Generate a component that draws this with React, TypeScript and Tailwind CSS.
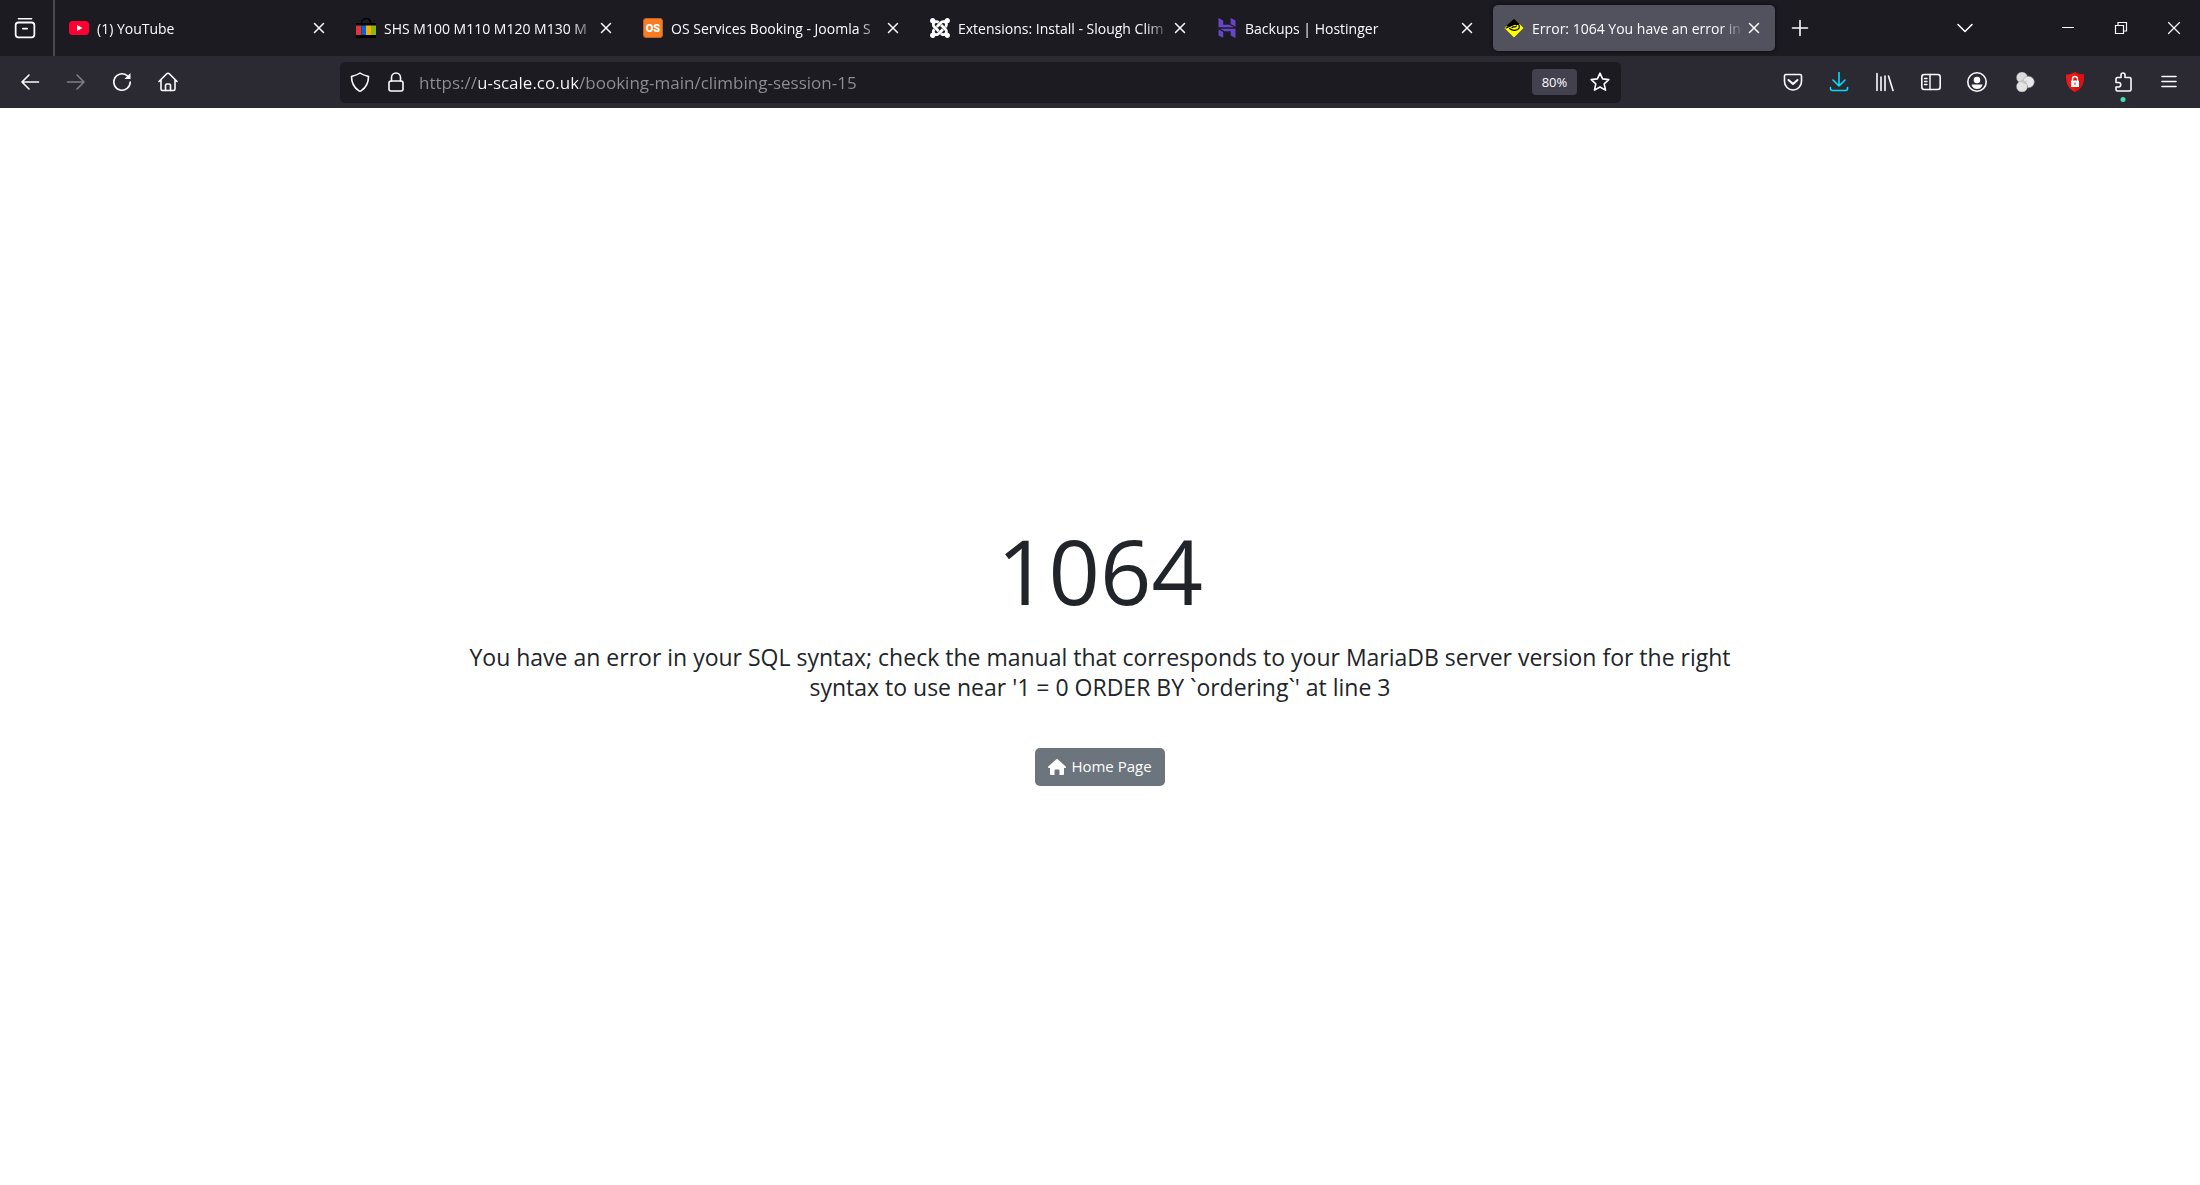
import React from 'react';
import type { ReactNode } from 'react';
import { SiHostinger, SiJoomla } from 'react-icons/si';

type IconProps = { children: ReactNode; className?: string };

const Icon = ({ children, className = 'size-5' }: IconProps) => (
  <svg
    viewBox="0 0 20 20"
    fill="none"
    stroke="currentColor"
    strokeWidth="1.6"
    strokeLinecap="round"
    strokeLinejoin="round"
    className={`shrink-0 ${className}`}
    aria-hidden="true"
  >
    {children}
  </svg>
);

const CloseIcon = () => (
  <Icon>
    <path d="M5.5 5.5l9 9M14.5 5.5l-9 9" strokeWidth="1.5" />
  </Icon>
);

const YoutubeIcon = () => (
  <Icon>
    <rect x="0" y="3" width="20" height="14" rx="3.5" fill="#ff0033" stroke="none" />
    <path d="M8 7l5.5 3L8 13z" fill="#fff" stroke="none" />
  </Icon>
);

const EbayIcon = () => (
  <Icon>
    <g stroke="none">
      <path d="M0 5h20v15H0z" fill="#000" />
      <path d="M0 7.5h5.5V17H0z" fill="#e53238" />
      <path d="M5.5 7.5H10V17H5.5z" fill="#0064d2" />
      <path d="M10 7.5h5V17h-5z" fill="#f5af02" />
      <path d="M15 7.5h5V17h-5z" fill="#86b817" />
    </g>
    <path d="M5.5 5c0-6 9-6 9 0" stroke="#000" strokeWidth="1.3" />
  </Icon>
);

const ServicesIcon = () => (
  <span className="flex size-5 shrink-0 items-center justify-center rounded-[3px] border border-[#b8672f] bg-[#f97b22] font-['Roboto',sans-serif] text-[11px] font-black leading-none text-white">
    OS
  </span>
);

const SignIcon = () => (
  <Icon>
    <g stroke="none">
      <path d="M10 .5l9.5 9.5-9.5 9.5L.5 10z" fill="#ffff00" />
      <path d="M10 .5l5.500 5.500-3 0-6 2.500-3.500 0-1-.500z" fill="#000" />
    </g>
    <path
      d="M2 10c3-.500 5-3 7.500-3.500l5-.200c1.500 1.500 1 4-1 5.200-2.500 1.200-6 .500-8-1M8 9.500c1.500-1.500 3 .500 4.500-1.500"
      stroke="#000"
      strokeWidth="1.2"
    />
  </Icon>
);

const tabs: { title: string; icon: ReactNode; active?: boolean }[] = [
  { title: '(1) YouTube', icon: <YoutubeIcon /> },
  { title: 'SHS M100 M110 M120 M130 M', icon: <EbayIcon /> },
  { title: 'OS Services Booking - Joomla S', icon: <ServicesIcon /> },
  {
    title: 'Extensions: Install - Slough Clim',
    icon: <SiJoomla className="size-5 shrink-0 text-white" />,
  },
  {
    title: 'Backups | Hostinger',
    icon: <SiHostinger className="size-5 shrink-0 text-[#6747c7]" />,
  },
  {
    title: 'Error: 1064 You have an error in',
    icon: <SignIcon />,
    active: true,
  },
];

type BarButtonProps = {
  label: string;
  children: ReactNode;
  className?: string;
  disabled?: boolean;
};

const BarButton = ({
  label,
  children,
  className = 'w-[42px]',
  disabled,
}: BarButtonProps) => (
  <button
    type="button"
    aria-label={label}
    disabled={disabled}
    className={`flex h-10 shrink-0 items-center justify-center rounded disabled:opacity-40 ${className}`}
  >
    {children}
  </button>
);

const TabBar = () => (
  <div className="flex h-14 items-center bg-[#1c1b22]">
    <div className="flex h-14 w-[55px] shrink-0 items-center border-r-2 border-[#4a4950] pl-1">
      <BarButton label="View recent browsing">
        <Icon className="size-[22px]">
          <path d="M4 1.500h12" strokeWidth="1.400" />
          <rect x="1.500" y="5" width="17" height="13.500" rx="2.500" />
          <path d="M8 10.500h4" />
        </Icon>
      </BarButton>
    </div>
    <div className="ml-[3px] flex min-w-0 flex-1 items-center gap-[5px]">
      {tabs.map((tab) => (
        <div
          key={tab.title}
          className={`flex h-[46px] min-w-0 max-w-[282px] flex-1 items-center rounded-[5px] pl-[11px] pr-[11px] ${
            tab.active ? 'bg-[#52525e] shadow-[0_0_4px_#000000aa]' : ''
          }`}
        >
          <button
            type="button"
            className="flex h-full min-w-0 flex-1 items-center gap-2 text-left"
          >
            {tab.icon}
            <span className="min-w-0 flex-1 overflow-hidden whitespace-nowrap pt-px text-[14px] leading-5 [mask-image:linear-gradient(to_right,#000_calc(100%-24px),transparent)]">
              {tab.title}
            </span>
          </button>
          <button type="button" aria-label="Close tab" className="shrink-0">
            <CloseIcon />
          </button>
        </div>
      ))}
      <BarButton label="New tab" className="w-10">
        <Icon>
          <path d="M10 2.500v15M2.500 10h15" />
        </Icon>
      </BarButton>
    </div>
    <BarButton label="List all tabs" className="mr-14 w-10">
      <Icon>
        <path d="M3 6.500l7 7 7-7" />
      </Icon>
    </BarButton>
    <BarButton label="Minimise" className="w-[53px]">
      <Icon>
        <path d="M4 9.500h12" strokeWidth="1" strokeLinecap="butt" />
      </Icon>
    </BarButton>
    <BarButton label="Restore" className="w-[53px]">
      <Icon>
        <path
          d="M4.500 7.500h8v8h-8zM7 7V4.500h8.500V13H13"
          strokeWidth="1.200"
          strokeLinejoin="miter"
        />
      </Icon>
    </BarButton>
    <BarButton label="Close window" className="w-[53px]">
      <Icon>
        <path d="M4.500 4.500l11 11M15.500 4.500l-11 11" strokeWidth="1.200" />
      </Icon>
    </BarButton>
  </div>
);

const AddressBar = () => (
  <div className="flex h-[41px] min-w-0 max-w-[1281px] flex-[20] items-center rounded-[5px] bg-[#1c1b22] px-[2px]">
    <BarButton label="Tracking protection" className="w-9">
      <Icon>
        <path d="M10 1c2.500 2 5.500 2.700 8.500 3.500 0 6-2.500 11-7.200 14.200a2.600 2.600 0 0 1-2.600 0C4 15.500 1.500 10.500 1.500 4.500 4.500 3.700 7.500 3 10 1z" />
      </Icon>
    </BarButton>
    <BarButton label="Connection secure" className="w-[35px]">
      <Icon>
        <rect x="3" y="9" width="14" height="10" rx="2" />
        <path d="M5.500 9V5.500a4.500 4.500 0 0 1 9 0V9" />
      </Icon>
    </BarButton>
    {/* the domain part is brighter than the rest of the address */}
    <input
      type="text"
      aria-label="Address"
      defaultValue="https://u-scale.co.uk/booking-main/climbing-session-15"
      className="ml-[6px] h-9 min-w-0 flex-1 bg-[linear-gradient(to_right,#8f8f96_60px,#fbfbfe_60px,#fbfbfe_159px,#8f8f96_159px)] bg-clip-text pt-px text-[17px] leading-6 text-transparent caret-white outline-none"
    />
    <button
      type="button"
      className="mr-1 h-[26px] w-[45px] rounded bg-[#42414d] text-center text-[13px] leading-[26px]"
    >
      80%
    </button>
    <BarButton label="Bookmark this page" className="w-[38px]">
      <Icon>
        <path d="M10 1.200l2.600 5.700 6.200.7-4.600 4.200 1.300 6.300L10 15l-5.500 3.100 1.300-6.300L1.200 7.600l6.200-.7z" />
      </Icon>
    </BarButton>
  </div>
);

const ToolBar = () => (
  <div className="flex h-[52px] items-center gap-1 bg-[#2b2a33] pl-[9px] pr-[10px]">
    <BarButton label="Back">
      <Icon>
        <path d="M18.500 10H2M9 3l-7 7 7 7" />
      </Icon>
    </BarButton>
    <BarButton label="Forward" disabled>
      <Icon>
        <path d="M1.500 10H18M11 3l7 7-7 7" />
      </Icon>
    </BarButton>
    <BarButton label="Reload">
      <Icon>
        <path d="M18.200 10a8.200 8.200 0 1 1-3-6.300l1.500 1.500" />
        <path d="M18.500 1v6h-6z" fill="currentColor" stroke="none" />
      </Icon>
    </BarButton>
    <BarButton label="Home">
      <Icon>
        <path d="M1 9.500l7.700-7.700a1.800 1.800 0 0 1 2.600 0L19 9.500M3 8v9a1.500 1.500 0 0 0 1.500 1.500h11A1.500 1.500 0 0 0 17 17V8" />
        <path d="M7.500 18.500v-5a1.500 1.500 0 0 1 1.500-1.500h2a1.500 1.500 0 0 1 1.500 1.500v5" />
      </Icon>
    </BarButton>
    <div className="-mx-1 flex min-w-0 flex-1">
      <div className="flex-1" />
      <AddressBar />
      <div className="flex-1" />
    </div>
    <BarButton label="Save to Pocket">
      <Icon>
        <path d="M3 2.500h14A1.500 1.500 0 0 1 18.500 4v5.500a8.500 8.500 0 0 1-17 0V4A1.500 1.500 0 0 1 3 2.500z" />
        <path d="M5.500 8l4.500 4 4.500-4" strokeWidth="2" />
      </Icon>
    </BarButton>
    <BarButton label="Downloads" className="w-[42px] text-[#00ddff]">
      <Icon>
        <path d="M10 0v13.500M4 8l6 6 6-6M1.500 15.500v1a2 2 0 0 0 2 2h13a2 2 0 0 0 2-2v-1" />
      </Icon>
    </BarButton>
    <BarButton label="Library">
      <Icon>
        <path d="M2 1.500v17M6 5v13.500M10 4v14.500M13.500 4l4.500 14.500" />
      </Icon>
    </BarButton>
    <BarButton label="Sidebars">
      <Icon>
        <rect x="0.800" y="2.500" width="18.400" height="15" rx="2.500" />
        <path d="M9 2.500v15M3.500 6.500h2.500M3.500 9.500h2.500M3.500 12.500h2.500" strokeWidth="1.400" />
      </Icon>
    </BarButton>
    <BarButton label="Account">
      <Icon>
        <circle cx="10" cy="10" r="9.200" />
        <circle cx="10" cy="8" r="3.300" fill="currentColor" stroke="none" />
        <path d="M4.500 12.500h11c-.500 3-3 4.500-5.500 4.500s-5-1.500-5.500-4.500z" fill="currentColor" stroke="none" />
      </Icon>
    </BarButton>
    <BarButton label="Containers" className="w-[46px]">
      <Icon>
        <g stroke="#8b8b8b" strokeWidth="0.500">
          <circle cx="7" cy="5.500" r="5.500" fill="#dcdcdc" />
          <circle cx="13.500" cy="10" r="5.800" fill="#e8e8e8" />
          <circle cx="7" cy="14.500" r="5.500" fill="#e3e3e3" />
        </g>
        <path d="M5 9.500c2.500 1.500 5 1 7-1.500l-1 4.500z" fill="#c4c4c4" stroke="none" />
      </Icon>
    </BarButton>
    <BarButton label="Lock shield" className="w-[46px]">
      <Icon>
        <g stroke="none">
          <path d="M10 0c3 2 6 2.500 9 2.500 0 8-1 13.500-9 17.500C2 16 1 10.500 1 2.500 4 2.500 7 2 10 0z" fill="#f31818" />
          <path d="M10 0c3 2 6 2.500 9 2.500 0 8-1 13.500-9 17.500z" fill="#dc1010" />
          <rect x="6" y="8.500" width="8" height="6.500" rx="0.500" fill="#fff" />
          <path d="M9.500 10.500h1v2.500h-1z" fill="#dc1010" />
        </g>
        <path d="M7.500 8.500V7a2.500 2.500 0 0 1 5 0v1.500" stroke="#fff" strokeWidth="1.300" />
      </Icon>
    </BarButton>
    <BarButton label="Extensions" className="relative w-[42px]">
      <Icon>
        <path d="M3 7V7a1.500 1.500 0 0 1 1.500-1.500H8V3a2 2 0 0 1 4 0v2.500h4.500A1.500 1.500 0 0 1 18 7v10.500a1.500 1.500 0 0 1-1.500 1.500h-12A1.500 1.500 0 0 1 3 17.500V15h2.500a2.200 2.200 0 0 0 0-4.500H3z" />
      </Icon>
      <span className="absolute bottom-0 left-1/2 size-[5px] -translate-x-1/2 rounded-full bg-[#3fe1b0]" />
    </BarButton>
    <BarButton label="Menu">
      <Icon>
        <path d="M3 4.500h14M3 9.500h14M3 14.500h14" />
      </Icon>
    </BarButton>
  </div>
);

const ErrorPage = (): React.JSX.Element => (
  <main className="flex flex-1 flex-col items-center justify-center bg-white px-6 pt-1 text-center text-[#212529]">
    <h1 className="text-[90px] leading-[116px]">1064</h1>
    <p className="mt-[14px] max-w-[1296px] text-[23px] leading-[30px]">
      You have an error in your SQL syntax; check the manual that corresponds to
      your MariaDB server version for the right syntax to use near &apos;1 = 0
      ORDER BY `ordering`&apos; at line 3
    </p>
    <a
      href="#"
      className="mt-[46px] flex h-[38px] items-center gap-[5px] rounded-[5px] bg-[#6c757d] px-[13px] text-[15px] text-white"
    >
      <svg viewBox="0 0 18 16" fill="currentColor" className="h-4 w-[18px]" aria-hidden="true">
        <path d="M9 0a1 1 0 0 1 .7.300L17.700 7.400c.600.600.300 1.500-.600 1.500h-1.100V15a1 1 0 0 1-1 1h-3.500v-4.500a1 1 0 0 0-1-1h-3a1 1 0 0 0-1 1V16H3a1 1 0 0 1-1-1V8.900H.900C0 8.900-.300 8 .300 7.400L8.300.300A1 1 0 0 1 9 0z" />
      </svg>
      Home Page
    </a>
  </main>
);

const App = (): React.JSX.Element => (
  <div className="flex min-h-screen flex-col font-['Open_Sans','Noto_Sans',sans-serif]">
    <header className="text-[#fbfbfe]">
      <TabBar />
      <ToolBar />
    </header>
    <ErrorPage />
  </div>
);

export default App;
